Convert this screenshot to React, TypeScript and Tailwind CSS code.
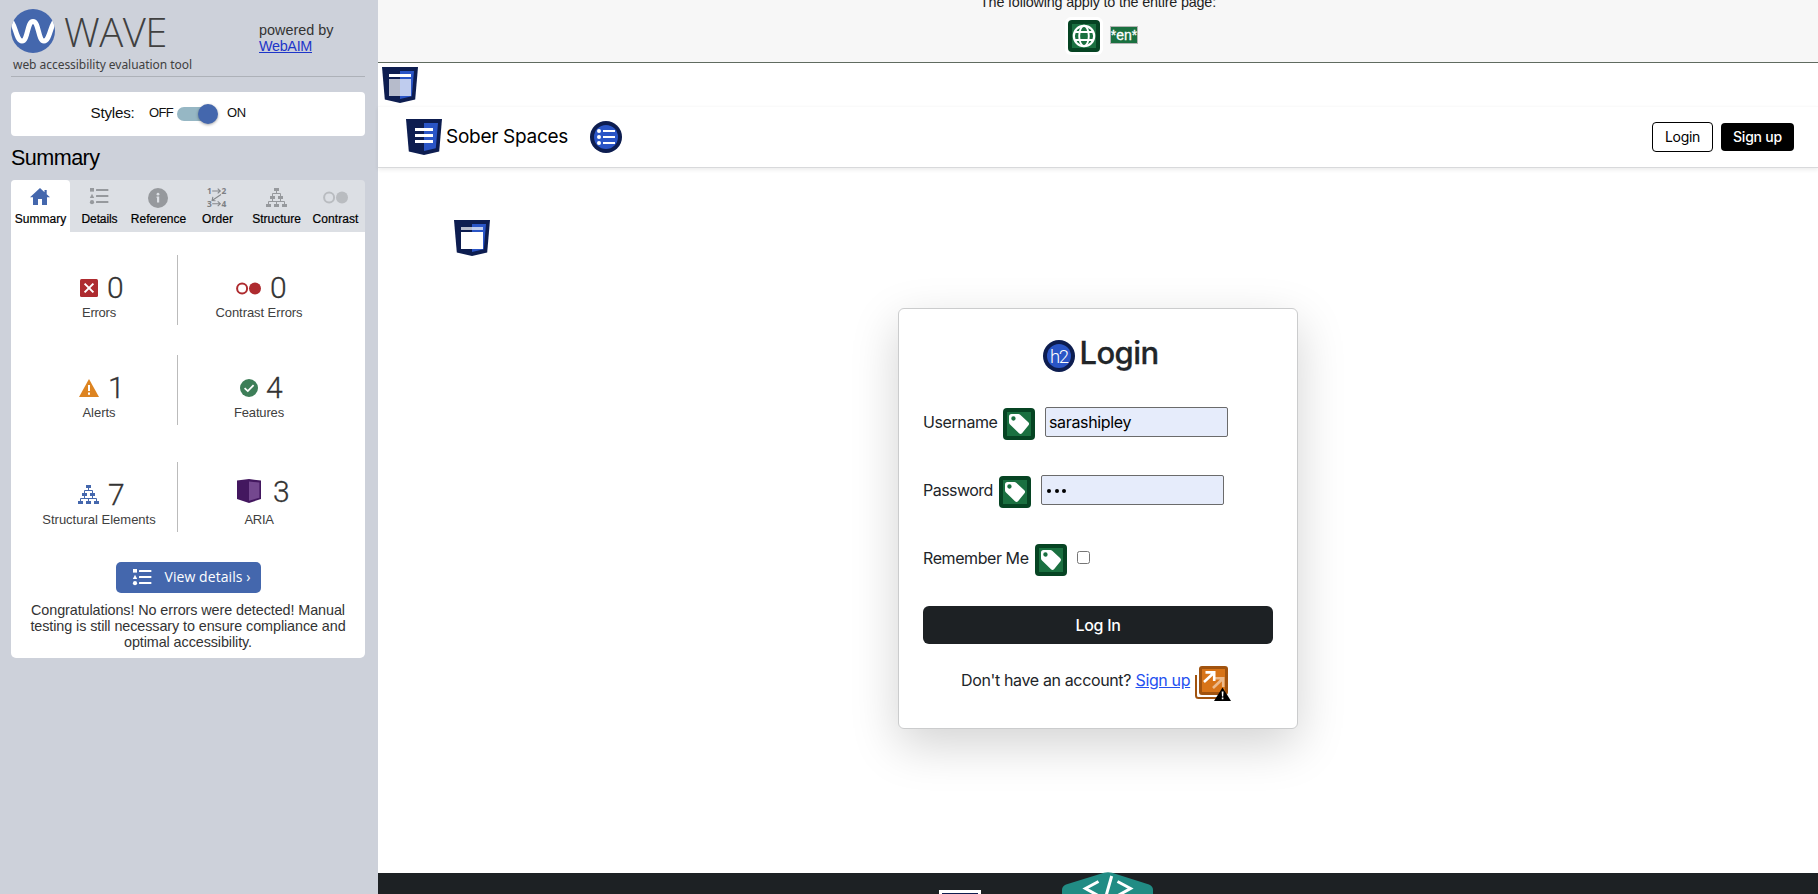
import type { ReactNode } from "react";

const helv = "font-['Liberation_Sans',Arial,sans-serif]";

function WaveLogo() {
  return (
    <svg width="44" height="44" viewBox="0 0 44 44" className="shrink-0">
      <defs>
        <clipPath id="disc"><circle cx="22" cy="22" r="22" /></clipPath>
      </defs>
      <circle cx="22" cy="22" r="22" fill="#4467ad" />
      <path
        d="M-1 11C4 13 5 32 11 32C17 32 16 12.5 22 12.5C28 12.5 27 32 33 32C39 32 40 13 45 11"
        fill="none" stroke="#fff" strokeWidth="5" clipPath="url(#disc)"
      />
    </svg>
  );
}

function HomeIcon() {
  return (
    <svg width="24" height="24" viewBox="0 0 24 24">
      <path d="M12 2L2 11.2H5V19H10V13H14V19H19V11.2H22L18.7 8.2V4H16.5V6.2Z" fill="#4467ad" />
    </svg>
  );
}

function ListIcon({ color }: { color: string }) {
  return (
    <svg width="24" height="24" viewBox="0 0 24 24" fill={color}>
      <rect x="3" y="2" width="4" height="3.6" />
      <path d="M5 7.8L7.2 12H2.8Z" />
      <circle cx="5" cy="16.2" r="2.1" />
      <rect x="9" y="3" width="12.4" height="2" rx=".5" />
      <rect x="9" y="9" width="12.4" height="2" rx=".5" />
      <rect x="9" y="15" width="12.4" height="2" rx=".5" />
    </svg>
  );
}

function InfoIcon() {
  return (
    <svg width="24" height="24" viewBox="0 0 24 24">
      <circle cx="12" cy="12" r="10" fill="#96999d" />
      <circle cx="12" cy="8.2" r="1.4" fill="#dcdfe4" />
      <path d="M10.6 10.6H13.2V16.6H11V12H10.6Z" fill="#dcdfe4" />
    </svg>
  );
}

function OrderIcon() {
  return (
    <svg width="24" height="24" viewBox="0 0 24 24">
      <g fill="#7d8084" fontFamily="Open Sans, sans-serif" fontWeight="700" fontSize="8.4">
        <text x="2" y="8">1</text>
        <text x="16.4" y="8">2</text>
        <text x="2" y="20.6">3</text>
        <text x="16.4" y="20.6">4</text>
      </g>
      <g fill="none" stroke="#85888c" strokeWidth="1.1">
        <path d="M7.2 5H15.2M12.7 2.6L15.3 5L12.7 7.4" />
        <path d="M7.2 17.7H15.2M12.7 15.3L15.3 17.7L12.7 20.1" />
        <path d="M16 8.5L7.5 14.2M7.9 10.8L7.1 14.4L10.5 14.8" />
      </g>
    </svg>
  );
}

function TreeIcon({ color }: { color: string }) {
  return (
    <svg width="21" height="20" viewBox="0 0 21 20">
      <g fill={color}>
        <rect x="8" y="0" width="5" height="3" />
        <rect x="4" y="8" width="5" height="3" />
        <rect x="12" y="8" width="5" height="3" />
        <rect x="0" y="16" width="5" height="3" />
        <rect x="8" y="16" width="5" height="3" />
        <rect x="16" y="16" width="5" height="3" />
      </g>
      <path
        d="M10.5 3V5.5M6.5 8V5.5H14.5V8M6.5 11V13.5M14.5 11V13.5M2.5 16V13.5H18.5V16M10.5 13.5V16"
        fill="none" stroke={color} strokeWidth="1"
      />
    </svg>
  );
}

function ContrastIcon({ color }: { color: string }) {
  return (
    <svg width="25" height="13" viewBox="0 0 25 13">
      <circle cx="6.1" cy="6.5" r="5" fill="none" stroke={color} strokeWidth="2" />
      <circle cx="19" cy="6.5" r="6" fill={color} />
    </svg>
  );
}

function Shield({ kind }: { kind: "banner" | "main" | "nav" }) {
  return (
    <svg width="36" height="36" viewBox="0 0 36 36" className="shrink-0">
      <path d="M0 0H36L33.2 32.5L18 36L2.8 32.5Z" fill="#0d1d50" />
      <path d="M18 4H32L29.8 29.2L18 32Z" fill="#2a55c6" />
      {kind === "nav" ? (
        <path d="M9 9H27V12H9ZM9 15H27V18H9ZM9 21H27V24H9Z" fill="#fff" />
      ) : (
        <>
          <rect x="7" y="7" width="22" height="3" fill="#fff" opacity={kind === "banner" ? 1 : 0.7} />
          <rect x="7" y="12" width="22" height="17" fill="#fff" opacity={kind === "banner" ? 0.7 : 1} />
        </>
      )}
    </svg>
  );
}

function TagIcon({ className }: { className: string }) {
  return (
    <svg width="32" height="32" viewBox="0 0 32 32" className={className}>
      <rect width="32" height="32" rx="4" fill="#064423" />
      <rect x="4" y="4" width="24" height="24" fill="#1a7040" />
      <path
        fillRule="evenodd" fill="#fff"
        d="M6 8.5Q6 6 8.5 6H15.4Q16.4 6 17.2 6.7L25.3 14.2Q26.8 15.7 25.5 17.2L19 25.2Q17.5 26.6 16 25.2L7 16.6Q6 15.6 6 14.2ZM10.4 8.3A2.2 2.2 0 1 0 10.5 12.7A2.2 2.2 0 0 0 10.4 8.3Z"
      />
    </svg>
  );
}

function GlobeIcon() {
  return (
    <svg width="32" height="32" viewBox="0 0 32 32">
      <rect width="32" height="32" rx="4" fill="#064423" />
      <rect x="4" y="4" width="24" height="24" fill="#1a7040" />
      <g fill="none" stroke="#fff" strokeWidth="1.9">
        <circle cx="16" cy="16" r="10.2" strokeWidth="2.2" />
        <ellipse cx="16" cy="16" rx="4.8" ry="10.2" />
        <path d="M7 12H25M7 20H25" />
      </g>
    </svg>
  );
}

function NavListIcon() {
  return (
    <svg width="32" height="32" viewBox="0 0 32 32">
      <circle cx="16" cy="16" r="16" fill="#0d1d50" />
      <circle cx="16" cy="16" r="12" fill="#2a55c6" />
      <g fill="#fff">
        <circle cx="9" cy="10" r="2" />
        <circle cx="9" cy="16" r="2" />
        <circle cx="9" cy="22" r="2" />
        <path d="M13 9H25V11H13ZM13 15H25V17H13ZM13 21H25V23H13Z" />
      </g>
    </svg>
  );
}

function H2Icon() {
  return (
    <svg width="32" height="32" viewBox="0 0 32 32" className="mt-[7px] shrink-0">
      <circle cx="16" cy="16" r="16" fill="#0d1d50" />
      <circle cx="16" cy="16" r="12" fill="#2a55c6" />
      <text x="7" y="23" fill="#fff" fontFamily="Roboto, sans-serif" fontWeight="300" fontSize="18.5" textLength="19">h2</text>
    </svg>
  );
}

function RedundantLinkIcon() {
  return (
    <svg width="37" height="36" viewBox="0 0 37 36" className="mt-[2px] ml-1">
      <path d="M1 9V29.5Q1 32 3.5 32H24" fill="none" stroke="#a1530f" strokeWidth="2" />
      <rect x="4" y="0" width="29" height="29" rx="3" fill="#a1530f" />
      <rect x="7" y="3" width="23" height="23" fill="#d87418" />
      <g fill="none" strokeWidth="2.6">
        <path d="M18 22L28 12.5M19.5 12.3H28.2V21" stroke="#fff" opacity=".5" />
        <path d="M9 16L19 6.8M10.5 6.4H19.2V15" stroke="#fff" />
      </g>
      <path d="M27.5 21.5L36 35H19Z" fill="#000" />
      <path d="M26.7 25.5H28.5L28.2 30.6H27ZM26.8 31.6H28.4V33.2H26.8Z" fill="#fff" />
    </svg>
  );
}

function Tab({ label, active, tracking, children }: { label: string; active?: boolean; tracking: string; children: ReactNode }) {
  return (
    <div className={`flex flex-col items-center rounded-t-[4px] ${active ? "bg-white" : ""}`}>
      <div className="-ml-px flex h-8 flex-col items-center pt-[6px]">{children}</div>
      <span className={`text-[12px] leading-[14px] whitespace-nowrap text-black [-webkit-text-stroke:0.2px_#000] ${tracking}`}>{label}</span>
    </div>
  );
}

function Stat({ icon, count, label, pad, gap, tracking, up }: { icon: ReactNode; count: number; label: string; pad: string; gap: string; tracking: string; up?: boolean }) {
  return (
    <div className="flex flex-col">
      <div className={`flex h-[50px] items-start ${pad} ${gap}`}>
        {icon}
        <span className={`font-[Roboto,sans-serif] text-[30px] leading-8 font-light text-[#333] [-webkit-text-stroke:0.3px_#333] ${up ? "pt-[14px]" : "pt-[16.5px]"}`}>{count}</span>
      </div>
      <span className={`text-center text-[13px] leading-4 whitespace-nowrap text-[#404040] ${tracking}`}>{label}</span>
    </div>
  );
}

function StatRow({ left, right, margin }: { left: ReactNode; right: ReactNode; margin: string }) {
  return (
    <div className={`grid h-[70px] grid-cols-[157px_162px] pl-[10px] ${margin}`}>
      <div className="border-r border-[#bbb]">{left}</div>
      {right}
    </div>
  );
}

function Sidebar() {
  return (
    <aside className={`h-full w-[378px] shrink-0 bg-[#cdd1da] pr-[13px] pl-[11px] ${helv}`}>
      <header className="flex h-[77px] border-b border-[#adb1b8]">
        <div className="w-[248px] pt-[9px]">
          <div className="flex h-[45px]">
            <WaveLogo />
            <span className="ml-[9px] font-['Open_Sans',sans-serif] text-[40px] leading-[45px] font-light tracking-[-0.5px] text-[#404040]">WAVE</span>
          </div>
          <div className="mt-[3px] pl-[2px] font-['Noto_Sans',sans-serif] text-[12px] leading-4 tracking-[-0.04px] text-[#404040]">web accessibility evaluation tool</div>
        </div>
        <div className="pt-[22px] text-[14.4px] leading-4 text-[#333]">
          powered by<br />
          <a className="tracking-[-0.32px] text-[#1d35c9] underline">WebAIM</a>
        </div>
      </header>

      <section className="mt-[15px] flex h-11 rounded-[4px] bg-white pl-[79.5px] leading-[42px] text-[#111]">
        <span className="w-[58.5px] text-[15.2px] tracking-[-0.22px]">Styles:</span>
        <span className="w-7 text-[13px] tracking-[-0.66px]">OFF</span>
        <div className="mt-[15px] flex h-[14px] w-[38px] items-center justify-end rounded-full bg-[#96b7c4]">
          <div className="-mr-[3px] size-5 shrink-0 rounded-full bg-[#4467ad] shadow-[0_1px_3px_rgba(0,0,0,0.35)]" />
        </div>
        <span className="ml-3 text-[13px] tracking-[-0.25px]">ON</span>
      </section>

      <h1 className="h-11 pt-[9px] text-[21.6px] leading-[26px] tracking-[-0.56px] text-black">Summary</h1>

      <nav className="grid h-[52px] grid-cols-6 rounded-t-[4px] bg-[#dcdfe4]">
        <Tab label="Summary" active tracking=""><HomeIcon /></Tab>
        <Tab label="Details" tracking="tracking-[-0.1px]"><ListIcon color="#96999d" /></Tab>
        <Tab label="Reference" tracking=""><InfoIcon /></Tab>
        <Tab label="Order" tracking="tracking-[0.06px]"><OrderIcon /></Tab>
        <Tab label="Structure" tracking=""><div className="pt-[2px]"><TreeIcon color="#96999d" /></div></Tab>
        <Tab label="Contrast" tracking="tracking-[0.08px]"><div className="pt-[5px]"><ContrastIcon color="#b9bcc0" /></div></Tab>
      </nav>

      <section className="h-[426px] rounded-b-[5px] bg-white pt-[23px]">
        <StatRow
          margin=""
          left={
            <Stat pad="pl-[59px]" gap="gap-[9px]" count={0} label="Errors" tracking="tracking-[-0.23px]"
              icon={
                <svg width="18" height="18" viewBox="0 0 18 18" className="mt-6">
                  <rect width="18" height="18" rx="1.5" fill="#ae2b2f" />
                  <path d="M4.6 4.6L13.4 13.4M13.4 4.6L4.6 13.4" stroke="#fff" strokeWidth="2" />
                </svg>
              } />
          }
          right={
            <Stat pad="pl-[58px]" gap="gap-[9px]" count={0} label="Contrast Errors" tracking="tracking-[-0.07px]"
              icon={<div className="mt-[26.5px]"><ContrastIcon color="#ae2b2f" /></div>} />
          }
        />
        <StatRow
          margin="mt-[30px]"
          left={
            <Stat pad="pl-[58px]" gap="gap-[9px]" count={1} label="Alerts" tracking=""
              icon={
                <svg width="20" height="18" viewBox="0 0 20 18" className="mt-6">
                  <path d="M10 0L20 18H0Z" fill="#dd8421" />
                  <path d="M9 6H11V12H9ZM9 13.6H11V15.8H9Z" fill="#fff" />
                </svg>
              } />
          }
          right={
            <Stat pad="pl-[62px]" gap="gap-2" count={4} label="Features" tracking="tracking-[-0.16px]"
              icon={
                <svg width="18" height="18" viewBox="0 0 18 18" className="mt-6">
                  <circle cx="9" cy="9" r="9" fill="#3d7e58" />
                  <path d="M4.6 9.2L7.8 12.1L13.6 6.2" fill="none" stroke="#fff" strokeWidth="1.8" />
                </svg>
              } />
          }
        />
        <StatRow
          margin="mt-[37px]"
          left={
            <Stat pad="pl-[57px]" gap="gap-[9px]" count={7} label="Structural Elements" tracking=""
              icon={<div className="mt-[23px]"><TreeIcon color="#4467ad" /></div>} />
          }
          right={
            <Stat up pad="pl-[59px]" gap="gap-3" count={3} label="ARIA" tracking="tracking-[-0.33px]"
              icon={
                <svg width="24" height="24" viewBox="0 0 24 24" className="mt-[17px]">
                  <path d="M0 1.5L12 0L24 1.5V20L12 24L0 20Z" fill="#43175f" />
                  <path d="M12 2.4L22.4 3.6V18.8L12 21.8Z" fill="#74488f" />
                </svg>
              } />
          }
        />
        <button className="mx-auto mt-[30px] flex h-[31px] w-[145px] items-start rounded-[5px] bg-[#4467ad] pt-[5px] pl-[14px]">
          <ListIcon color="#ffffff" />
          <span className="-mt-[5px] ml-[11px] font-['Open_Sans',sans-serif] text-[14px] leading-[29px] tracking-[0.07px] whitespace-nowrap text-white">View details ›</span>
        </button>
        <p className="mt-[9px] text-center text-[14.4px] leading-4 tracking-[-0.094px] whitespace-nowrap text-[#333]">
          Congratulations! No errors were detected! Manual<br />
          testing is still necessary to ensure compliance and<br />
          optimal accessibility.
        </p>
      </section>
    </aside>
  );
}

function LoginCard() {
  const input = "mt-px h-[30px] w-[183px] rounded-[2px] border border-[#6b6b6b] bg-[#e6ecfb] text-black";
  return (
    <section className="mx-auto mt-[52px] h-[421px] w-[400px] rounded-[6px] border border-[#cbcccd] bg-white p-6 text-[16px] text-[#212529] shadow-[0_16px_48px_rgba(0,0,0,0.175)]">
      <div className="flex h-10 justify-center gap-[5px] pl-[5px]">
        <H2Icon />
        <h2 className="text-[31px] leading-10 font-medium tracking-[-0.6px] [-webkit-text-stroke:0.3px_#212529]">Login</h2>
      </div>
      <div className="mt-[33px] flex h-[34px] leading-8">
        <label className="w-20 tracking-[-0.4px]">Username</label>
        <TagIcon className="mt-[2px] mr-[10px]" />
        <div className={`${input} pl-[3px] leading-7 tracking-[-0.35px]`}>sarashipley</div>
      </div>
      <div className="mt-[34px] flex h-[34px] leading-8">
        <label className="w-[76px] tracking-[-0.52px]">Password</label>
        <TagIcon className="mt-[2px] mr-[10px]" />
        <div className={`${input} flex items-center gap-[3.5px] pt-[2px] pl-1`}>
          <i className="ml-px size-[4px] rounded-full bg-black" />
          <i className="size-[4px] rounded-full bg-black" />
          <i className="size-[4px] rounded-full bg-black" />
        </div>
      </div>
      <div className="mt-[34px] flex h-[34px] leading-8">
        <label className="w-28 tracking-[-0.42px]">Remember Me</label>
        <TagIcon className="mt-[2px] mr-[10px]" />
        <div className="mt-[9px] size-[13px] rounded-[2.5px] border border-[#767676] bg-white" />
      </div>
      <button className="mt-[30px] block h-[38px] w-full rounded-[6px] bg-[#1d2124] text-center leading-[38px] font-medium tracking-[-0.31px] text-white">Log In</button>
      <div className="mt-5 flex h-9 pl-[38px] leading-8 whitespace-nowrap">
        <span className="w-[174.5px] tracking-[-0.36px]">Don't have an account?</span>
        <a className="w-[55.5px] tracking-[-0.36px] text-[#2450f0] underline">Sign up</a>
        <RedundantLinkIcon />
      </div>
    </section>
  );
}

function PageView() {
  return (
    <div className="flex h-full flex-1 flex-col bg-white font-[Inter,sans-serif]">
      <div className={`h-[63px] overflow-hidden border-b border-[#606b60] bg-[#f7f7f7] ${helv}`}>
        <p className="-mt-[6px] text-center text-[14.4px] leading-4 tracking-[-0.185px] text-[#1f1f1f]">The following apply to the entire page:</p>
        <div className="mt-[7px] flex pl-[687px]">
          <div className="rounded-[6px] bg-white p-[3px]"><GlobeIcon /></div>
          <span className="mt-[9px] ml-[7px] flex h-[18px] w-7 justify-center border border-[#b5b5b5] bg-[#1a7040] text-[14px] leading-4 text-white [-webkit-text-stroke:0.3px_#fff]">*en*</span>
        </div>
      </div>
      <div className="h-[43px] pt-1 pl-1"><Shield kind="banner" /></div>
      <header className="flex h-[62px] items-center border-t border-b border-t-[#fafafa] border-b-[#d8d9db] pr-6 pl-7 shadow-[0_2px_4px_rgba(0,0,0,0.075)]">
        <Shield kind="nav" />
        <span className="ml-1 w-36 pt-px text-[19px] tracking-[-0.28px] text-black">Sober Spaces</span>
        <NavListIcon />
        <div className="ml-auto flex items-center gap-2 text-center text-[14px]">
          <button className="h-[30px] w-[61px] rounded-[4px] border border-black pb-px tracking-[-0.31px] text-black">Login</button>
          <button className="h-7 w-[73px] rounded-[4px] bg-black pb-px font-medium tracking-[-0.21px] text-white">Sign up</button>
        </div>
      </header>
      <main className="h-[705px] pt-[52px]">
        <div className="h-9 pl-[76px]"><Shield kind="main" /></div>
        <LoginCard />
      </main>
      <footer className="relative h-[21px] bg-[#1d2124]">
        <svg width="42" height="4" viewBox="0 0 42 4" className="absolute bottom-0 left-[561px]">
          <path d="M0 0H42V4H0Z" fill="#fff" />
          <path d="M3 3H39V4H3Z" fill="#0d1d50" />
        </svg>
        <svg width="92" height="22" viewBox="0 0 92 22" className="absolute bottom-0 left-[684px]">
          <path d="M0 22V18Q0 14 4 12.4L42 .8Q46 -.4 50 .8L87 12.4Q91 14 91 18V22Z" fill="#218c84" />
          <g fill="none" stroke="#fff" strokeWidth="3">
            <path d="M36.5 9.5L23.5 16.5L36 23.5M55.5 9.5L68.5 16.5L56 23.5" />
            <path d="M49.7 4L44 24" />
          </g>
        </svg>
      </footer>
    </div>
  );
}

export default function App() {
  return (
    <div className="flex h-[894px] w-[1818px] overflow-hidden">
      <Sidebar />
      <PageView />
    </div>
  );
}
